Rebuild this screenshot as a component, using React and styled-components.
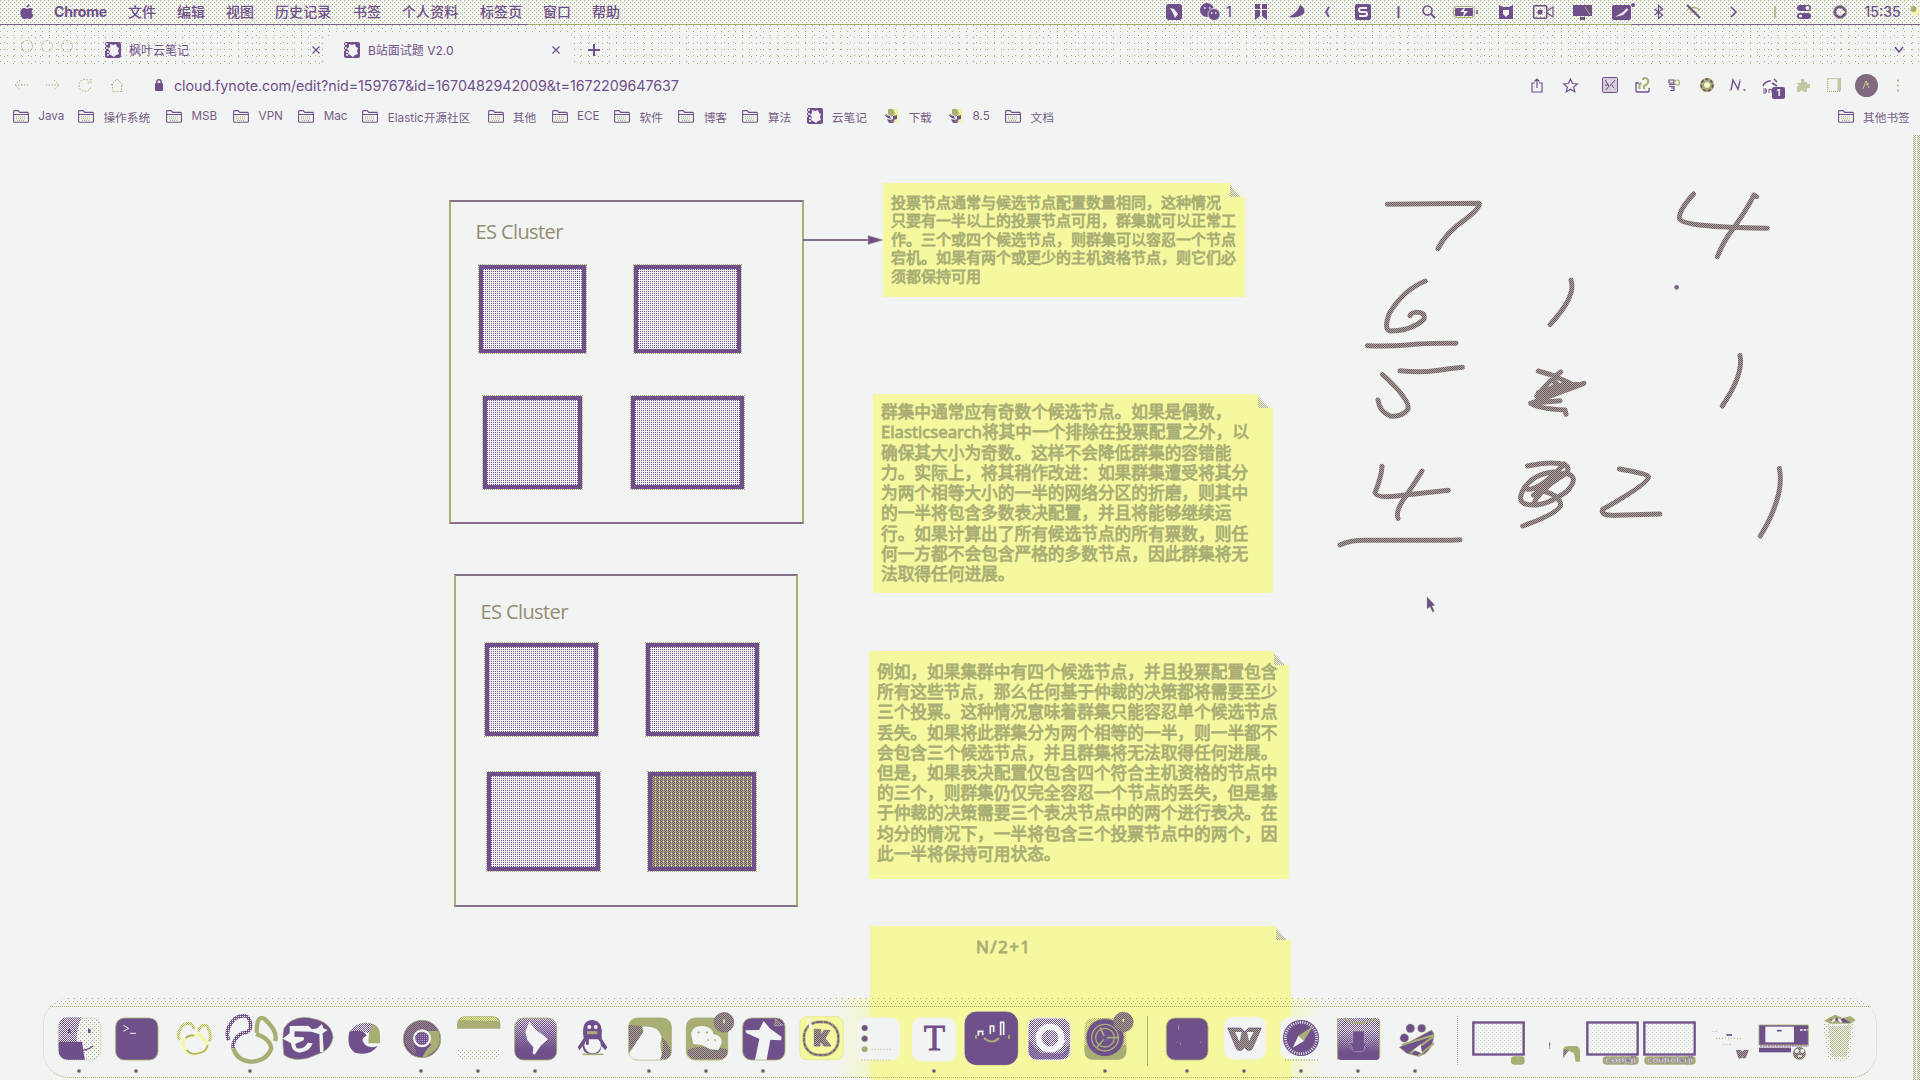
import React from "react";
import styled, { createGlobalStyle, css } from "styled-components";

const P = "#70508a";
const O = "#a8ae74";
const Y = "#f6f8a0";
const W = "#f2f4f3";

const dot = (c) => `conic-gradient(at 1px 1px, transparent 75%, ${c} 0)`;

const Global = createGlobalStyle`
  * { box-sizing: border-box; }
  body { margin: 0; background: ${W}; overflow: hidden; }
  svg { display: block; overflow: visible; flex: none; }
`;

const Screen = styled.div`
  position: relative;
  width: 1920px;
  height: 1080px;
  display: flex;
  flex-direction: column;
  overflow: hidden;
  color: ${P};
  background: ${W};
  font-family: Inter, "Noto Sans CJK SC", sans-serif;
`;

const MenuBar = styled.header`
  height: 24px;
  flex: none;
  display: flex;
  align-items: center;
  padding: 0 2px 0 20px;
  font-size: 14px;
  font-weight: 500;
  line-height: 24px;
  background-image: ${dot(O)}, ${dot(O)};
  background-size: 4px 4px;
  background-position: 0 0, 2px 2px;
`;

const MenuLabels = styled.nav`
  display: flex;
  gap: 21px;
  margin-left: 20px;
  white-space: nowrap;
`;

const MenuLabel = styled.span`
  font-weight: ${(p) => (p.$bold ? 700 : 500)};
  width: ${(p) => p.$w}px;
  letter-spacing: ${(p) => (p.$bold ? "-0.2px" : "0.1px")};
`;

const Push = styled.div`
  margin-left: auto;
  display: flex;
  align-items: center;
`;

const Slot = styled.div`
  position: relative;
  flex: none;
  width: ${(p) => p.$w}px;
  margin-left: ${(p) => p.$ml || 0}px;
  display: flex;
  align-items: center;
  justify-content: center;
  white-space: nowrap;
`;

const Rule = styled.div`
  height: 1px;
  flex: none;
  background: linear-gradient(90deg, #7b6285 528px, ${O} 0 1632px, #7b6285 0);
`;

const TabStrip = styled.div`
  height: 41px;
  flex: none;
  display: flex;
  padding: 0 16px 0 21px;
  font-size: 12px;
  background-image: ${dot(O)}, ${dot(O)};
  background-size: 7px 6px, 9px 7px;
  background-position: 0 0, 4px 3px;
`;

const Lights = styled.div`
  display: flex;
  gap: 8px;
  padding-top: 15px;
  margin-right: 19px;
`;

const Light = styled.i`
  width: 12px;
  height: 12px;
  border: 1px dotted ${O};
  border-radius: 50%;
`;

const Tab = styled.div`
  width: ${(p) => p.$w}px;
  height: 41px;
  margin-top: 0;
  padding: ${(p) => (p.$active ? "0 14px 0 18px" : "8px 6px 0 13px")};
  display: flex;
  align-items: center;
  ${(p) =>
    p.$active &&
    css`
      background: ${W};
      border-radius: 9px 9px 0 0;
      margin-top: 8px;
      height: 33px;
    `}
`;

const TabTitle = styled.span`
  margin-left: 8px;
  flex: 1;
  white-space: nowrap;
`;

const NewTab = styled(Slot)`
  padding-top: 8px;
`;

const AddressRow = styled.div`
  height: 38px;
  flex: none;
  display: flex;
  align-items: center;
  padding: 0 20px 0 14px;
`;

const Nav = styled.div`
  display: flex;
  gap: 18px;
  color: ${O};
`;

const Url = styled.span`
  margin-left: 11px;
  font-size: 14.3px;
  letter-spacing: -0.07px;
  white-space: nowrap;
`;

const Bookmarks = styled.div`
  height: 24px;
  margin-bottom: 2px;
  flex: none;
  display: flex;
  align-items: center;
  padding: 0 10px 0 13px;
  font-size: 11.7px;
  color: #765c87;
`;

const Bookmark = styled.div`
  display: flex;
  align-items: center;
  gap: 9.3px;
  margin-right: 15.8px;
`;

const BookmarkText = styled.span`
  width: ${(p) => p.$w}px;
  white-space: nowrap;
`;

const Badge = styled.b`
  position: absolute;
  right: 0;
  top: 9px;
  width: 13px;
  height: 12px;
  border-radius: 2px;
  background: ${P};
  color: ${W};
  font-size: 9px;
  line-height: 12px;
  text-align: center;
`;

const Canvas = styled.main`
  position: relative;
  flex: 1;
  overflow: hidden;
`;

const ScrollTrack = styled.div`
  position: absolute;
  top: 5px;
  right: 0;
  bottom: 0;
  width: 7px;
  background-image: ${dot(O)}, ${dot(O)};
  background-size: 2px 2px, 4px 2px;
  background-position: 0 0, 1px 1px;
`;

/* Free canvas shapes; coordinates are in screen pixels, canvas starts at 130. */
const Shape = styled.div`
  position: absolute;
  left: ${(p) => p.$x}px;
  top: ${(p) => p.$y - 130}px;
  width: ${(p) => p.$w}px;
  height: ${(p) => p.$h}px;
`;

const Cluster = styled(Shape)`
  border: 2px solid ${O};
  border-top-color: #85728a;
  border-bottom-color: #85728a;
`;

const ClusterTitle = styled.div`
  position: absolute;
  left: ${(p) => p.$left}px;
  top: ${(p) => p.$top}px;
  font: 20px/26px "Open Sans", "Noto Sans", sans-serif;
  letter-spacing: -0.6px;
  color: #948c72;
  white-space: nowrap;
`;

const Node = styled(Shape)`
  border: 4px solid ${P};
  background-color: ${(p) => (p.$dark ? O : W)};
  background-image: ${dot(P)}${(p) => (p.$dark ? `, ${dot(P)}, ${dot(Y)}` : "")};
  background-size: 2px 2px${(p) => (p.$dark ? ", 4px 2px, 4px 4px" : "")};
  background-position: 0 0${(p) => (p.$dark ? ", 1px 1px, 3px 1px" : "")};
  outline: 1px dotted ${O};
`;

const Note = styled(Shape)`
  padding: ${(p) => p.$pt}px 0 0 ${(p) => p.$pl}px;
  background: ${Y};
  clip-path: polygon(0 0, calc(100% - 15px) 0, calc(100% - 15px) 14px, 100% 14px, 100% 100%, 0 100%);
  color: ${O};
  font-family: "Noto Sans", "Noto Sans CJK SC", sans-serif;
  font-size: ${(p) => p.$fs}px;
  line-height: ${(p) => p.$lh}px;
  letter-spacing: ${(p) => p.$ls || 0}px;
  font-weight: 400;
  -webkit-text-stroke: 0.8px ${O};
`;

const Line = styled.div`
  white-space: nowrap;
`;

const Fold = styled.svg`
  position: absolute;
  left: ${(p) => p.$x}px;
  top: ${(p) => p.$y - 130}px;
`;

const Layer = styled.svg`
  position: absolute;
  left: ${(p) => p.$x}px;
  top: ${(p) => p.$y - 130}px;
`;

const DockShell = styled.footer`
  position: absolute;
  left: 43px;
  top: 998px;
  width: 1834px;
  height: 80px;
  border-radius: 26px;
  border-bottom: 1px dotted ${O};
  border-left: 1px dotted #cfd2b4;
  border-right: 1px dotted #cfd2b4;
  background:
    ${dot(O)} 0 0 / 6px 3px repeat-x,
    ${dot(O)} 1px 3px / 4px 3px repeat-x,
    ${dot(O)} 3px 5px / 4px 3px repeat-x,
    ${dot(O)} 0 8px / 2px 2px repeat-x,
    linear-gradient(90deg, transparent 790px, ${Y} 860px 1210px, transparent 1280px);
  display: flex;
  padding-left: 6px;
`;

const Item = styled.svg.attrs({ width: 57, height: 90 })`
  margin-top: -8px;
`;

const Divider = styled.div`
  width: 1px;
  height: 50px;
  margin: 18px ${(p) => p.$r}px 0 ${(p) => p.$l}px;
  background: ${(p) => (p.$dotted ? `repeating-linear-gradient(${O} 0 1px, transparent 1px 2px)` : O)};
`;

const Hidden = styled.svg`
  position: absolute;
`;

const Pattern = ({ id, bg, c, t = 6, t2 = t, stagger }) => (
  <pattern id={id} width={t} height={t2} patternUnits="userSpaceOnUse">
    {bg && <rect width={t} height={t2} fill={bg} />}
    <rect width="3" height="3" fill={c} />
    {stagger && <rect x={t / 2} y={t2 / 2} width="3" height="3" fill={c} />}
  </pattern>
);

const Defs = () => (
  <Hidden width="0" height="0">
    <defs>
      <Pattern id="mix" bg={O} c={P} stagger />
      <Pattern id="pw" bg={P} c={W} stagger />
      <Pattern id="pw4" bg={P} c={W} />
      <Pattern id="ow" c={O} t={12} stagger />
      <Pattern id="ow2" c={O} stagger />
      <Pattern id="oy" bg={Y} c={O} stagger />
      <linearGradient id="deep" x1="0" y1="0" x2="0" y2="1">
        <stop offset="0" stopColor={P} stopOpacity="0" />
        <stop offset="0.75" stopColor={P} />
      </linearGradient>
    </defs>
  </Hidden>
);

const I = ({ w, h = 16, vb, children, ...r }) => (
  <svg width={w} height={h} viewBox={vb || `0 0 ${w} ${h}`} fill="none" stroke={P} strokeWidth="1.5" {...r}>
    {children}
  </svg>
);

const Apple = () => (
  <I w={14} h={16} fill={P} stroke="none">
    <path d="M9.6.2c.1 1.6-1.200 3.300-2.900 3.300C6.600 1.900 8 .400 9.600.200zM13 5.600c-2 1.200-1.700 4.300.5 5.200-.8 2.300-2.100 4.300-3.500 4.300-1.100 0-1.500-.7-2.800-.7s-1.700.7-2.700.7C2.400 15.100.3 11.500.3 8.500c0-3 2-4.500 3.800-4.500 1.300 0 2.100.8 3.100.8.9 0 1.900-.9 3.400-.9 1 0 1.900.6 2.400 1.700z" />
  </I>
);

const Folder = () => (
  <I w={16} h={13} strokeWidth="1.1">
    <path d="M.6 11.300V1.600q0-1 1-1h3.600l1.500 1.800h7.700q1 0 1 1v7.900q0 1-1 1H1.600q-1 0-1-1zM.6 4.500h14.800" />
    <path d="M3 6.800h10M3 8.800h10M4 10.600h8" stroke={O} strokeDasharray="1 1" strokeWidth="1" />
  </I>
);

const Leaf = () => (
  <I w={16} h={16} stroke="none">
    <rect width="16" height="16" rx="2" fill={P} />
    <path d="M5 2l3 1 3-1 1 3 2 1-1 3 1 3-3 1-2 2-3-2-2-1 1-3-2-2 2-2z" fill={W} />
    <path d="M1 2h2M1 6h2M2 10h2M2 13h2M0 4h1M0 8h1" stroke={W} />
  </I>
);

const Hive = () => (
  <I w={16} h={16} stroke="none">
    <path d="M9 1h6v13H9z" fill={Y} />
    <path d="M5 1h5l2 4-3 4-4-3zM2 5l3 2-1 2z" fill={O} />
    <path d="M1 7l6 1 1 3-3-1zM10 8l4-1v4l-4 1zM4 11l4 1 1 3H6z" fill={P} />
    <circle cx="9.500" cy="13" r="2" fill="#85728a" />
  </I>
);

const Close = () => (
  <I w={8} h={8}><path d="M.5.5l7 7M7.500.500l-7 7" strokeWidth="1.300" /></I>
);

const menu = [["文件", 28], ["编辑", 28], ["视图", 28], ["历史记录", 57], ["书签", 28], ["个人资料", 57], ["标签页", 42], ["窗口", 28], ["帮助", 28]];

const status = [
  [0, 16, <I w={16}><rect width="16" height="16" rx="3" fill={P} stroke="none" /><path d="M4 4l4 1 4 5-3 4-2-5z" fill={W} stroke="none" /></I>],
  [17, 21, <I w={21} stroke="none"><circle cx="8" cy="6" r="7" fill={P} /><circle cx="15" cy="10.500" r="6" fill={P} stroke={W} strokeWidth=".7" /><path d="M5 4h1.500M10 4h1.500M12 9h1.500M16 9h1.500" stroke={W} /></I>],
  [6, 6, "1"],
  [23, 12, <I w={12} stroke="none"><path d="M0 0h5v5H0zM7 0h5v5H7zM0 6h5v6l-5 4zM7 6h5v10l-5-4z" fill={P} /></I>],
  [21, 17, <I w={17} stroke="none"><path d="M12 1c5 2 6 8 2 10-3 2-9 3-13 2C6 10 10 7 12 1z" fill={P} /></I>],
  [19, 8, <I w={8} h={12}><path d="M5 1L2 6l3 5" strokeWidth="2" /></I>],
  [23, 16, <I w={16}><rect width="16" height="16" rx="2" fill={P} stroke="none" /><path d="M12 4H6q-2 0-2 2t2 2h4q2 0 2 2t-2 2H4" stroke={W} strokeWidth="2" /></I>],
  [26, 3, <I w={3} h={12}><path d="M1.500 0v12" strokeWidth="2" /></I>],
  [22, 14, <I w={14} h={14}><circle cx="5.500" cy="5.500" r="4.500" /><path d="M9 9l4 4" strokeWidth="2" /></I>],
  [17, 25, <I w={25} h={12}><rect x=".5" y=".5" width="21" height="11" rx="3" strokeWidth="1" stroke={O} /><rect x="2" y="2" width="18" height="8" rx="1" fill={P} stroke="none" /><path d="M12 1L7 6h4l-1 5 5-6h-4z" fill={W} stroke="none" /><path d="M24 4v4" /></I>],
  [21, 14, <I w={14} h={14} stroke="none"><path d="M0 0l4 2h6l4-2v14H0z" fill={P} /><path d="M4 5h6v4l-3 3-3-3z" fill={W} /></I>],
  [20, 21, <I w={21} h={14}><rect x=".7" y=".7" width="13" height="12.600" rx="1" /><circle cx="7" cy="7" r="2.600" fill={P} stroke="none" /><path d="M14 6l6-4v10l-6-4" strokeWidth="1.200" /></I>],
  [19, 19, <I w={19} h={14} stroke="none"><path d="M0 0h19v11H0zM7 12h5v3H7z" fill={P} /><path d="M12 2l5 8" stroke={O} strokeWidth="1" /></I>],
  [20, 23, <I w={23} h={18} stroke="none"><rect y="2" width="19" height="15" rx="2" fill={P} /><circle cx="21" cy="2" r="2" fill={P} /><path d="M3 14l8-5 4-4 1 2-5 5z" fill={W} /></I>],
  [18, 11, <I w={11} h={14}><path d="M1.500 4l8 6-4 3.500V.5l4 3.500-8 6" strokeWidth="1.300" /></I>],
  [22, 15, <I w={15} h={14}><path d="M1 5q6-5 13 0M4 8q4-3 7 0" stroke={O} /><path d="M1 0l13 13" strokeWidth="1.800" /></I>],
  [29, 8, <I w={8} h={10}><path d="M1 0l5 5-5 5" strokeWidth="1.600" /></I>],
  [36, 2, <I w={2} h={12}><path d="M1 0v12" stroke={O} /></I>],
  [21, 14, <I w={14} h={14} stroke="none"><rect width="14" height="6" rx="3" fill={P} /><circle cx="10.500" cy="3" r="2" fill={W} /><rect y="8" width="14" height="6" rx="3" fill={P} /><circle cx="3.500" cy="11" r="1.600" fill={W} /></I>],
  [22, 14, <I w={14} h={14}><circle cx="7" cy="7" r="5.300" strokeWidth="3" /><path d="M9 7h3" stroke={W} strokeWidth="2" /><circle cx="7" cy="7" r="6.500" stroke={O} strokeWidth=".9" /></I>],
  [17, 37, "15:35"],
  [9, 8, <I w={8} h={12} stroke="none"><circle cx="5" cy="5" r="4" fill={Y} /><circle cx="3.500" cy="3" r="3" fill={O} /></I>],
];

const tools = [
  [0, 13, <I w={13} h={15} strokeWidth="1.200"><path d="M4 5H1v9h10V5H8M6 10V1M3.500 3.500L6 1l2.500 2.500" /></I>],
  [19, 15, <I w={15} h={15} strokeWidth="1.200"><path d="M7.500 1l2 4.500 4.800.4-3.700 3.200 1.200 4.700-4.300-2.500-4.300 2.500 1.200-4.700L.7 5.900l4.800-.4z" /></I>],
  [24, 16, <I w={16} strokeWidth="1"><rect x=".5" y=".5" width="15" height="15" rx="1" fill="#d5cdda" /><path d="M3 3l4 6-3 4M8 9l5-6M10 8l3 5M3 8h4" stroke={P} /><path d="M5 4h3M10 12h3" stroke={W} /></I>],
  [17, 15, <I w={15} strokeWidth="1.300"><path d="M4 6H1v8q0 1 1 1h11q1 0 1-1v-3" /><path d="M4.500 12V8q0-1 2-2M8 3q0-2 2-2t3 2-1 4-3 2v3" stroke={O} strokeWidth="2" /></I>],
  [18, 12, <I w={12} h={14} strokeWidth="1.200"><path d="M1 2h5v3H1zM1 6.500h6M1 8.500h5v4H2M3 10h3" /><circle cx="9" cy="4.500" r="2.500" stroke={O} /></I>],
  [19, 16, <I w={16}><circle cx="8" cy="8" r="7.500" fill={Y} stroke="none" /><circle cx="8" cy="8" r="4.800" stroke={O} strokeWidth="4.500" /><circle cx="8" cy="8" r="5.800" stroke={P} strokeWidth="1.800" strokeDasharray="3 2" /><circle cx="8" cy="8" r="2.500" fill={W} stroke={Y} strokeWidth="1" /></I>],
  [14, 17, <I w={17} h={12} strokeWidth="1.400"><path d="M2 11L4 1l5 9 2-8M14.500 11h2" /><path d="M10 1h2M0 11h2" stroke={O} strokeWidth="1" /></I>],
  [16, 23, <><I w={23} h={15} strokeWidth="1.600"><path d="M1 8q2-5 8-5M12 1l3 3M10 5l5 3" /><path d="M1 13h4M1 11h3v4H1M7 15v-4l3 1v3" strokeWidth="1" /></I><Badge>1</Badge></>],
  [11, 14, <I w={14} h={14} stroke="none"><path d="M5 1h3v3h3v2h3v4h-3v4H8l-2-2-3 2H1V9l2-2-3-2h5z" fill={O} opacity=".65" /></I>],
  [17, 14, <I w={14} h={14} stroke={O} strokeWidth="1.200"><path d="M.6.6h12.800v12.800H.6z" strokeDasharray="1 1" /><path d="M12 1v12" strokeWidth="3" opacity=".6" /></I>],
  [14, 23, <I w={23} h={23} stroke="none"><circle cx="11.500" cy="11.500" r="11.500" fill="#7f6a80" /><path d="M8 15l3-8 3 7M11 11l3-2" stroke={Y} strokeWidth=".8" opacity=".8" /></I>],
  [18, 4, <I w={4} h={13} stroke="none" fill={O}><circle cx="2" cy="1.500" r="1" /><circle cx="2" cy="6.500" r="1" /><circle cx="2" cy="11.500" r="1" /></I>],
];

const marks = [
  ["Java", 24], ["操作系统", 47], ["MSB", 26], ["VPN", 24], ["Mac", 23], ["Elastic开源社区", 84], ["其他", 23],
  ["ECE", 21.5], ["软件", 23], ["博客", 23], ["算法", 23], ["云笔记", 35.5, "leaf"], ["下载", 23, "hive"], ["8.5", 17, "hive"], ["文档", 23],
];

const nodes = [
  [479, 265, 107, 88], [634, 265, 107, 88], [483, 396, 99, 93], [631, 396, 113, 93],
  [485, 643, 113, 93], [646, 643, 113, 93], [487, 772, 113, 99], [648, 772, 108, 99, true],
];

const notes = [
  { x: 883, y: 183, w: 362, h: 114, pl: 8, pt: 10, fs: 15, lh: 18.4, lines: [
    "投票节点通常与候选节点配置数量相同，这种情况", "只要有一半以上的投票节点可用，群集就可以正常工", "作。三个或四个候选节点，则群集可以容忍一个节点", "宕机。如果有两个或更少的主机资格节点，则它们必", "须都保持可用"] },
  { x: 873, y: 394, w: 400, h: 199, pl: 8, pt: 8, fs: 16.7, lh: 20.25, lines: [
    "群集中通常应有奇数个候选节点。如果是偶数，", "Elasticsearch将其中一个排除在投票配置之外，以", "确保其大小为奇数。这样不会降低群集的容错能", "力。实际上，将其稍作改进：如果群集遭受将其分", "为两个相等大小的一半的网络分区的折磨，则其中", "的一半将包含多数表决配置，并且将能够继续运", "行。如果计算出了所有候选节点的所有票数，则任", "何一方都不会包含严格的多数节点，因此群集将无", "法取得任何进展。"] },
  { x: 869, y: 651, w: 420, h: 228, pl: 8, pt: 11, fs: 16.7, lh: 20.2, lines: [
    "例如，如果集群中有四个候选节点，并且投票配置包含", "所有这些节点，那么任何基于仲裁的决策都将需要至少", "三个投票。这种情况意味着群集只能容忍单个候选节点", "丢失。如果将此群集分为两个相等的一半，则一半都不", "会包含三个候选节点，并且群集将无法取得任何进展。", "但是，如果表决配置仅包含四个符合主机资格的节点中", "的三个，则群集仍仅完全容忍一个节点的丢失，但是基", "于仲裁的决策需要三个表决节点中的两个进行表决。在", "均分的情况下，一半将包含三个投票节点中的两个，因", "此一半将保持可用状态。"] },
  { x: 870, y: 926, w: 421, h: 160, pl: 106, pt: 11, fs: 17, lh: 20, ls: 1.4, lines: ["N/2+1"] },
];

const strokes = [
  "M202 103L478 100Q482 112 440 145Q375 190 354 236",
  "M1121 72Q1078 118 1078 145Q1085 172 1342 175",
  "M1310 80L1302 75Q1280 120 1238 178Q1210 215 1192 260",
  "M316 333Q250 360 208 430Q190 478 210 483Q275 482 312 448Q318 425 286 427Q270 430 270 437",
  "M142 527Q210 530 270 524T408 520",
  "M753 330Q770 378 690 464",
  "M240 602Q300 608 345 602T427 592",
  "M187 613Q272 690 264 718Q245 742 210 738Q178 725 174 690",
  "M655 603L700 617L748 638L655 668M722 606Q695 625 650 678L792 640L632 700L720 692M632 700Q650 715 735 720L738 733M700 650L770 643L690 665M700 632L725 655",
  "M1260 556Q1272 612 1207 708",
  "M186 889Q186 915 165 968Q170 985 230 978L385 961",
  "M306 903Q290 930 262 972Q225 1020 234 1045",
  "M60 1125Q90 1110 140 1111H395L420 1109",
  "M622 888Q700 872 735 885Q760 900 715 925Q660 960 638 1005M733 882Q660 960 622 958M715 905Q650 905 615 950Q590 990 612 1000Q660 1020 740 965Q785 915 730 910Q680 925 650 960Q720 970 722 1005Q715 1030 608 1068M700 935L640 975",
  "M898 897Q985 912 986 920Q986 940 848 1018Q840 1038 890 1036L1020 1032",
  "M1378 895Q1395 975 1321 1098",
];

const Dot = ({ x }) => <circle cx={x} cy="243" r="5.500" fill={P} stroke={O} strokeWidth="2" />;
const Tile = ({ x, y = 84, w = 127, h = 126, r = 26, fill = P, stroke = O }) => (
  <rect x={x} y={y} width={w} height={h} rx={r} fill={fill} stroke={stroke} strokeWidth="2.500" />
);

const dockA = [
  { x: 60, dot: 147, g: <><Tile x={85} fill="url(#ow)" stroke="#d5d8bd" /><path d="M86 110Q86 82 115 82H155Q140 115 140 155H156L164 209H115Q86 209 86 180z" fill="url(#pw)" /><path d="M86 155H156L164 209H115Q86 209 86 180z" fill={P} /><path d="M118 117v12M178 117v12" stroke={P} strokeWidth="8" /><path d="M105 168Q155 195 189 168" stroke={P} strokeWidth="4" fill="none" /></> },
  { x: 231, dot: 318, g: <><Tile x={257} /><path d="M280 106L296 115L280 124M300 130H318" stroke={W} strokeWidth="3" fill="none" /></> },
  { x: 402, g: <g fill="none" strokeWidth="9"><path d="M448 150Q437 125 463 103Q487 92 493 118M505 125Q510 100 530 107Q548 135 538 155" stroke="url(#oy)" /><path d="M493 137Q462 136 458 160Q462 192 495 192Q540 185 532 160Q515 145 510 133z" stroke={Y} /><path d="M470 180Q480 192 495 192Q530 188 533 165M467 145Q475 134 493 137" stroke={O} strokeWidth="5" /></g> },
  { x: 573, dot: 660, g: <g fill="none" strokeWidth="11"><path d="M596 150Q582 120 615 85Q660 60 662 110Q660 128 635 130Q605 150 610 175" stroke="url(#pw4)" /><path d="M680 128Q680 70 705 88Q745 125 735 153M678 132Q720 145 724 175Q710 215 660 215Q620 210 610 175" stroke={O} strokeWidth="13" /></g> },
  { x: 744, g: <><path d="M762 115Q780 85 822 82Q905 88 909 142Q905 170 880 186L835 204Q790 216 762 195Q755 145 762 115z" fill={P} stroke={O} strokeWidth="2" /><path d="M779 108L835 107L846 118L862 115L876 102L880 115L893 120L878 130L881 185L870 187L868 133L845 125L794 124L793 140L822 142L821 151L795 162L800 175Q825 178 833 158L848 160Q840 185 808 188Q785 185 783 160L758 146L779 130z" fill={W} /></> },
  { x: 915, g: <><path d="M1004 98Q1050 98 1050 135V160H1015L1018 108z" fill={O} /><path d="M957 130Q970 100 1004 98L1026 101Q1026 122 1015 130Q990 120 980 135z" fill="url(#pw)" /><path d="M958 125Q948 170 975 188Q1020 200 1043 168Q1015 178 1002 160Q990 145 1010 137Q1000 115 958 125z" fill={P} /></> },
  { x: 1086, dot: 1173, g: <><circle cx="1176" cy="147" r="56" fill={P} stroke={O} strokeWidth="3" /><path d="M1180 122H1225Q1245 180 1178 203Q1182 185 1203 165z" fill={O} /><path d="M1130 115Q1175 65 1222 120H1180Q1150 125 1150 155L1160 195Q1110 170 1130 115z" fill="url(#mix)" opacity=".65" /><circle cx="1176" cy="145" r="27" fill={W} /><circle cx="1176" cy="145" r="20" fill={P} /><circle cx="1176" cy="145" r="20" fill="url(#pw4)" opacity=".5" /></> },
  { x: 1257, dot: 1344, g: <><Tile x={1282} y={84} fill="url(#ow)" stroke="none" /><rect x="1282" y="110" width="128" height="70" fill={W} /><path d="M1281 116V102Q1285 79 1305 79H1388Q1410 79 1411 102V116z" fill={O} /><path d="M1288 90Q1295 80 1305 80H1388Q1402 82 1408 94z" fill="url(#oy)" /></> },
  { x: 18, dot: 105, g: <><rect x="44" y="84" width="126" height="126" rx="26" fill="url(#pw)" /><Tile x={44} w={126} fill="url(#deep)" /><path d="M88 95L107 120L130 135L144 148L122 167L104 194L98 190L100 172L82 150L76 125z" fill={W} /></> },
  { x: 189, g: <><path d="M251 145Q242 90 277 90Q312 92 304 145L322 172L316 181L304 168Q302 195 277 193Q250 195 248 168L238 181L233 172z" fill={P} /><ellipse cx="278" cy="166" rx="25" ry="24" fill={W} /><circle cx="268" cy="111" r="6" fill={W} /><circle cx="287" cy="111" r="6" fill={W} /><path d="M261 128H292" stroke={O} strokeWidth="9" /><path d="M252 143H305M262 146v18" stroke={P} strokeWidth="9" /><path d="M248 193H310" stroke={O} strokeWidth="5" /></> },
  { x: 360, dot: 447, g: <><Tile x={386} w={128} fill={O} /><path d="M386 105L425 108L430 130L388 186z" fill="url(#mix)" /><path d="M388 190L431 124L427 110Q475 105 485 140Q475 175 492 209H415Q388 209 388 190z" fill={W} /><path d="M485 140Q515 170 513 190Q510 208 480 209Q495 175 485 140z" fill="url(#mix)" /></> },
  { x: 531, dot: 618, g: <><Tile x={559} w={124} fill={O} /><path d="M562 180Q600 160 682 178V190Q680 208 650 208H585Q562 205 562 180z" fill="url(#mix)" /><path d="M580 162L573 130Q580 105 610 108Q638 112 640 132Q668 138 665 160L655 180L630 178L606 165z" fill={W} /><path d="M593 127h6M618 127h6M622 150h5M643 150h5" stroke={O} strokeWidth="5" /><circle cx="672" cy="97" r="30" fill="url(#mix)" stroke={P} /><path d="M672 88v12" stroke={Y} strokeWidth="4" /></> },
  { x: 702, dot: 789, g: <><Tile x={728} /><path d="M736 121L777 120L791 93L809 115L845 141L843 151L811 149L800 209H765L778 147L739 129z" fill={W} /><path d="M824 108L826 87L850 105z" fill="url(#ow2)" stroke={W} /></> },
  { x: 873, g: <><Tile x={900} y={80} w={129} h={129} r={20} fill={Y} stroke="#e2e68e" /><rect x="912" y="96" width="103" height="99" rx="45" fill="none" stroke={O} strokeWidth="9" /><rect x="912" y="96" width="103" height="99" rx="45" fill="none" stroke={P} strokeWidth="4" strokeDasharray="12 3" /><path d="M943 118H962V136L972 121H990L975 145L993 168H972L960 152V168H943z" fill="url(#mix)" stroke="#85728a" strokeWidth="3" /><path d="M922 90h12M931 100v15" stroke={W} strokeWidth="9" /></> },
  { x: 1044, g: <><Tile x={1072} fill={W} stroke={W} /><circle cx="1094" cy="114" r="9" fill={P} stroke={O} /><circle cx="1094" cy="146" r="9" fill={P} stroke={O} strokeWidth="3" /><circle cx="1094" cy="178" r="9" fill={O} /><path d="M1085 210H1175M1115 178h60" stroke={O} strokeDasharray="3 6" strokeWidth="3" /></> },
  { x: 1215, dot: 1302, g: <><Tile x={1237} w={130} h={129} fill={W} stroke={W} /><text x="1303" y="181" textAnchor="middle" fontFamily="Liberation Serif, serif" fontSize="105" stroke={P} strokeWidth="2.5" fill={P}>T</text></> },
  { x: 6, g: <><Tile x={15} y={66} w={158} h={158} r={34} stroke={P} /><path d="M45 141h6M144 141h6" stroke={O} strokeWidth="10" /><path d="M72 144Q96 165 117 144" stroke={O} strokeWidth="6" fill="none" /><path d="M55 137V124H68V136M91 132V108H101V126M122 136V97H131V135" stroke={W} strokeWidth="5" fill="none" /></> },
  { x: 177, g: <><Tile x={204} fill="url(#pw)" stroke={W} /><path d="M206 150V185Q208 208 235 208H300Q330 205 329 160L310 190H240z" fill={P} opacity=".6" /><circle cx="270" cy="144" r="34" fill="none" stroke={W} strokeWidth="18" /><path d="M290 158L318 151L305 172z" fill={W} /></> },
  { x: 348, dot: 435, g: <><Tile x={373} w={126} fill="url(#ow2)" stroke="none" /><path d="M374 165H499V185Q498 209 470 209H402Q374 209 374 185z" fill={O} /><circle cx="435" cy="143" r="57" fill={P} stroke={O} strokeWidth="3" /><circle cx="435" cy="143" r="40" fill="none" stroke={O} strokeWidth="4" /><circle cx="435" cy="143" r="28" fill="none" stroke={O} strokeWidth="4" /><path d="M435 143L420 112M435 143H478M435 143L410 173" stroke={O} strokeWidth="5" /><circle cx="435" cy="143" r="7" fill={P} stroke={O} /><circle cx="490" cy="96" r="30" fill="url(#mix)" stroke={P} /><path d="M490 87v8" stroke={Y} strokeWidth="4" /></> },
];

const dockB = [
  { x: 594, dot: 681, g: <><Tile x={619} w={125} /><path d="M656 106v14M650 157h2M661 157v7M720 157h3" stroke={O} strokeWidth="2.500" /></> },
  { x: 765, dot: 852, g: <><Tile x={793} y={82} w={124} h={125} fill={W} stroke={W} /><path d="M803 114H842L854 125L866 114H904L876 178Q862 188 853 170Q845 188 830 178z" fill="url(#mix)" stroke={P} strokeWidth="2" /><path d="M825 126L839 155L845 126zM861 126L867 153L881 126z" fill={W} /></> },
  { x: 936, dot: 1023, g: <><Tile x={961} y={82} w={126} fill={W} stroke="none" /><path d="M975 210H1075" stroke={O} strokeDasharray="3 5" strokeWidth="5" /><circle cx="1023" cy="144" r="54" fill={P} /><circle cx="1023" cy="144" r="47" fill="none" stroke={W} strokeWidth="8" strokeDasharray="3 4" /><path d="M1059 108L1032 153L1015 137z" fill={O} /><path d="M998 173L1015 137L1032 153z" fill={W} /></> },
  { x: 1107, dot: 1194, g: <><Tile x={1132} w={127} r={12} fill="url(#pw)" stroke="none" /><rect x="1132" y="120" width="127" height="90" rx="12" fill="url(#deep)" /><path d="M1133 84V209M1259 90V200" stroke={O} strokeWidth="3" /><path d="M1150 85Q1195 115 1245 85" fill="none" stroke={O} strokeWidth="5" /><path d="M1178 123H1213V158H1225L1214 168V178L1205 185H1184L1176 178V168L1164 158H1178z" fill={P} stroke="#c9bed0" strokeWidth="1.500" /></> },
  { x: 1278, dot: 1365, g: <><circle cx="1333" cy="144" r="13" fill={P} stroke={O} /><circle cx="1351" cy="115" r="13" fill={P} stroke={O} /><circle cx="1385" cy="115" r="12" fill={P} stroke={O} /><path d="M1318 172L1415 120L1422 133Q1418 190 1375 199L1340 190z" fill={P} stroke={O} strokeWidth="2" /><path d="M1325 165L1422 135M1350 190L1420 140M1375 198L1422 160" stroke={O} strokeWidth="6" /><path d="M1360 180L1382 163L1386 190z" fill={W} /></> },
];

const Mini = ({ x, w, label, lx, lw }) => (
  <>
    <rect x={x} y="97.500" width={w} height="96" fill="url(#ow)" />
    <rect x={x} y="97.500" width={w} height="96" fill={W} fillOpacity=".6" stroke={P} strokeWidth="7" />
    <rect x={lx} y="199" width={lw} height="25" rx="10" fill={O} />
    {label && <text x={lx + lw / 2} y="219" textAnchor="middle" fontSize="24" fontWeight="700" fill={W} stroke={P} strokeWidth="1" textLength={lw - 16} lengthAdjust="spacingAndGlyphs" fontFamily="Inter, sans-serif">{label}</text>}
  </>
);

const dockC = [
  { x: 120, g: <Mini x={130} w={151} lx={243} lw={41} /> },
  { x: 291, g: <><path d="M359 155v22" stroke={O} strokeWidth="3" /><path d="M359 159v8" stroke={P} strokeWidth="3" /><path d="M400 200V175Q405 168 415 168H440Q450 172 450 182V215H437L432 190L417 182z" fill={O} /><path d="M400 205V180L417 178z" fill="url(#mix)" /></> },
  { x: 462, g: <Mini x={472} w={151} lx={518} lw={108} label="codeji" /> },
  { x: 633, g: <Mini x={643} w={151} lx={643} lw={154} label="controlerji" /> },
  { x: 804, g: <><path d="M848 124h14M858 145h80M880 163h22" stroke={O} strokeWidth="3" strokeDasharray="3 6" /><path d="M889 135h17" stroke={P} strokeWidth="5" /><path d="M919 181H932L937 187L942 181H955L946 204H940L937 199L933 204H926z" fill="url(#mix)" stroke={P} strokeWidth="2" /></> },
  { x: 975, g: <><rect x="987" y="105" width="148" height="60" fill={P} stroke={O} strokeWidth="2.500" /><rect x="1006" y="110" width="86" height="47" fill={W} /><path d="M1041 122h14" stroke={P} strokeWidth="5" /><path d="M1110 120h25" stroke={W} strokeWidth="4" strokeDasharray="8 3" /><path d="M990 168H1135" stroke={P} strokeWidth="3" strokeDasharray="6 2" /><rect x="987" y="173" width="96" height="14" fill={P} /><circle cx="1108" cy="190" r="19" fill="url(#mix)" stroke={O} /><circle cx="1101" cy="183" r="6" fill={W} /><circle cx="1117" cy="183" r="6" fill={W} /><path d="M1104 198h12" stroke={W} strokeWidth="5" /></> },
  { x: 1146, g: <><path d="M1178 98L1194 205Q1225 225 1258 205L1275 98Q1225 112 1178 98z" fill="url(#ow)" /><path d="M1195 108L1205 200H1250L1265 105z" fill="url(#ow2)" opacity=".75" /><path d="M1182 92L1200 82L1216 74L1238 84L1262 78L1277 90L1262 101H1200z" fill={O} /><path d="M1198 86L1210 98L1220 82L1230 92L1240 84L1262 98H1240" fill={P} /><path d="M1205 96l10-8M1225 88l10 9" stroke={W} strokeWidth="6" /></> },
];

const DockGroup = ({ items }) =>
  items.map((i) => (
    <Item key={i.x} viewBox={`${i.x} 0 171 270`}>
      {i.g}
      {i.dot && <Dot x={i.dot} />}
    </Item>
  ));

export default function App() {
  return (
    <Screen>
      <Global />
      <Defs />
      <MenuBar>
        <Apple />
        <MenuLabels>
          <MenuLabel $bold $w={53}>Chrome</MenuLabel>
          {menu.map(([t, w]) => <MenuLabel key={t} $w={w}>{t}</MenuLabel>)}
        </MenuLabels>
        <Push>{status.map(([m, w, el], i) => <Slot key={i} $ml={m} $w={w}>{el}</Slot>)}</Push>
      </MenuBar>
      <Rule />
      <TabStrip>
        <Lights><Light /><Light /><Light /></Lights>
        <Tab $w={234}><Leaf /><TabTitle>枫叶云笔记</TabTitle><Close /></Tab>
        <Tab $w={248} $active><Leaf /><TabTitle>B站面试题 V2.0</TabTitle><Close /></Tab>
        <NewTab $w={12} $ml={14}><I w={12} h={12}><path d="M6 0v12M0 6h12" strokeWidth="2" /></I></NewTab>
        <Push><I w={10} h={6} style={{ marginTop: 8 }}><path d="M1 0l4 5 4-5" /></I></Push>
      </TabStrip>
      <AddressRow>
        <Nav>
          <I w={14} h={14} stroke="currentColor" strokeWidth="1"><path d="M6 2L1 7l5 5M1 7h13" strokeDasharray="1.500 1.500" /></I>
          <I w={14} h={14} stroke="currentColor" strokeWidth="1"><path d="M8 2l5 5-5 5M13 7H0" strokeDasharray="1.500 1.500" /></I>
          <I w={14} h={14} stroke="currentColor" strokeWidth="1"><path d="M12 4a6 6 0 1 0 1 4M13 1v4H9" strokeDasharray="1.500 1.500" /></I>
          <I w={14} h={14} stroke="currentColor" strokeWidth="1"><path d="M1 7l6-6 6 6M2.500 6v7.500h9V6" strokeDasharray="1.500 1.500" /></I>
        </Nav>
        <Slot $w={8} $ml={31}><I w={8} h={12}><rect y="4" width="8" height="8" rx="1" fill={P} stroke="none" /><path d="M1.800 5V3a2.200 2.200 0 0 1 4.400 0V5" /></I></Slot>
        <Url>cloud.fynote.com/edit?nid=159767&amp;id=1670482942009&amp;t=1672209647637</Url>
        <Push>{tools.map(([m, w, el], i) => <Slot key={i} $ml={m} $w={w}>{el}</Slot>)}</Push>
      </AddressRow>
      <Bookmarks>
        {marks.map(([t, w, kind]) => (
          <Bookmark key={t}>
            {kind === "leaf" ? <Leaf /> : kind === "hive" ? <Hive /> : <Folder />}
            <BookmarkText $w={w}>{t}</BookmarkText>
          </Bookmark>
        ))}
        <Push><Folder /><BookmarkText $w={47} style={{ marginLeft: 9 }}>其他书签</BookmarkText></Push>
      </Bookmarks>
      <Canvas>
        <Cluster $x={449} $y={200} $w={355} $h={324}><ClusterTitle $left={24.5} $top={17}>ES Cluster</ClusterTitle></Cluster>
        <Cluster $x={454} $y={574} $w={344} $h={333}><ClusterTitle $left={24.5} $top={23}>ES Cluster</ClusterTitle></Cluster>
        {nodes.map(([x, y, w, h, d]) => <Node key={`${x}-${y}`} $x={x} $y={y} $w={w} $h={h} $dark={d} />)}
        <Layer $x={803} $y={235} width="81" height="10">
          <path d="M0 5H68" stroke="#85728a" strokeWidth="2" />
          <path d="M65 0.500L80 5L65 9.500z" fill={P} stroke={O} strokeWidth=".5" />
        </Layer>
        {notes.map((n) => (
          <React.Fragment key={n.y}>
            <Note $x={n.x} $y={n.y} $w={n.w} $h={n.h} $pl={n.pl} $pt={n.pt} $fs={n.fs} $lh={n.lh} $ls={n.ls}>
              {n.lines.map((l) => <Line key={l}>{l}</Line>)}
            </Note>
            <Fold $x={n.x + n.w - 15} $y={n.y + 2} width="12" height="12" viewBox="0 0 36 36">
              <path d="M0 0L33 36H0z" fill="url(#ow2)" />
            </Fold>
          </React.Fragment>
        ))}
        <Layer $x={1320} $y={170} width="500" height="460" viewBox="0 0 1500 1380">
          {strokes.map((d) => (
            <path key={d} d={d} fill="none" stroke="url(#mix)" strokeWidth="15" strokeLinecap="round" strokeLinejoin="round" />
          ))}
          <circle cx="1070" cy="352" r="7" fill="#7d6683" />
          <path d="M321 1280V1317L330 1310L338 1327L343 1322L336 1308L345 1306z" fill={P} stroke={O} strokeWidth="1" />
        </Layer>
        <ScrollTrack />
      </Canvas>
      <DockShell>
        <DockGroup items={dockA} />
        <Divider $l={14} $r={10} />
        <DockGroup items={dockB} />
        <Divider $dotted $l={14} $r={12} />
        <DockGroup items={dockC} />
      </DockShell>
    </Screen>
  );
}
